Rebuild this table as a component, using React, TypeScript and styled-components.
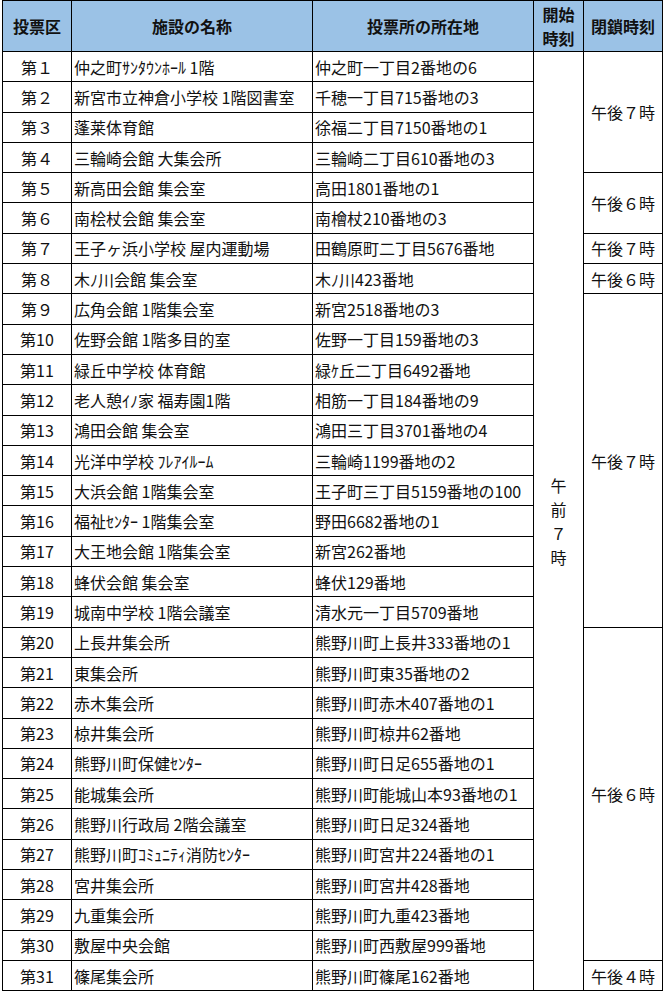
import React from "react";
import styled, { createGlobalStyle } from "styled-components";

const Global = createGlobalStyle`
  html, body { margin: 0; padding: 0; background: #fff; }
  body {
    font-family: "Noto Sans CJK JP", "Noto Sans", sans-serif;
    color: #111;
  }
`;

const Page = styled.div`
  padding: 0 0 0 2px;
`;

const Grid = styled.div`
  display: grid;
  width: max-content;
  grid-template-columns: 68px 240px 220px 49px 78px;
  grid-template-rows: 50px repeat(31, 29.3px);
  gap: 1px;
  padding: 1px;
  background: #000;
`;

const Cell = styled.div<{ $align?: "left" | "center" }>`
  background: #fff;
  display: flex;
  align-items: center;
  justify-content: ${(p) => (p.$align === "left" ? "flex-start" : "center")};
  padding: 0 ${(p) => (p.$align === "left" ? "0 0 2px" : "0")};
  padding-left: ${(p) => (p.$align === "left" ? "2px" : "0")};
  font-size: 16px;
  line-height: 1;
  white-space: nowrap;
  overflow: hidden;
`;

const HeadCell = styled.div`
  background: #9bc2e6;
  display: flex;
  align-items: center;
  justify-content: center;
  text-align: center;
  font-size: 16px;
  font-weight: 700;
  line-height: 24px;
  color: #111;
  white-space: pre-line;
`;

const StartCell = styled.div`
  grid-column: 4;
  grid-row: 2 / span 31;
  background: #fff;
  display: flex;
  align-items: center;
  justify-content: center;
  text-align: center;
  font-size: 16px;
  line-height: 24px;
  white-space: pre-line;
`;

const CloseCell = styled.div<{ $start: number; $span: number }>`
  grid-column: 5;
  grid-row: ${(p) => p.$start} / span ${(p) => p.$span};
  background: #fff;
  display: flex;
  align-items: center;
  justify-content: center;
  font-size: 16px;
  line-height: 1;
`;

const rows: [string, string, string][] = [
  ["第１", "仲之町ｻﾝﾀｳﾝﾎｰﾙ 1階", "仲之町一丁目2番地の6"],
  ["第２", "新宮市立神倉小学校 1階図書室", "千穂一丁目715番地の3"],
  ["第３", "蓬莱体育館", "徐福二丁目7150番地の1"],
  ["第４", "三輪崎会館 大集会所", "三輪崎二丁目610番地の3"],
  ["第５", "新高田会館 集会室", "高田1801番地の1"],
  ["第６", "南桧杖会館 集会室", "南檜杖210番地の3"],
  ["第７", "王子ヶ浜小学校 屋内運動場", "田鶴原町二丁目5676番地"],
  ["第８", "木ﾉ川会館 集会室", "木ﾉ川423番地"],
  ["第９", "広角会館 1階集会室", "新宮2518番地の3"],
  ["第10", "佐野会館 1階多目的室", "佐野一丁目159番地の3"],
  ["第11", "緑丘中学校 体育館", "緑ｹ丘二丁目6492番地"],
  ["第12", "老人憩ｲﾉ家 福寿園1階", "相筋一丁目184番地の9"],
  ["第13", "鴻田会館 集会室", "鴻田三丁目3701番地の4"],
  ["第14", "光洋中学校 ﾌﾚｱｲﾙｰﾑ", "三輪崎1199番地の2"],
  ["第15", "大浜会館 1階集会室", "王子町三丁目5159番地の100"],
  ["第16", "福祉ｾﾝﾀｰ 1階集会室", "野田6682番地の1"],
  ["第17", "大王地会館 1階集会室", "新宮262番地"],
  ["第18", "蜂伏会館 集会室", "蜂伏129番地"],
  ["第19", "城南中学校 1階会議室", "清水元一丁目5709番地"],
  ["第20", "上長井集会所", "熊野川町上長井333番地の1"],
  ["第21", "東集会所", "熊野川町東35番地の2"],
  ["第22", "赤木集会所", "熊野川町赤木407番地の1"],
  ["第23", "椋井集会所", "熊野川町椋井62番地"],
  ["第24", "熊野川町保健ｾﾝﾀｰ", "熊野川町日足655番地の1"],
  ["第25", "能城集会所", "熊野川町能城山本93番地の1"],
  ["第26", "熊野川行政局 2階会議室", "熊野川町日足324番地"],
  ["第27", "熊野川町ｺﾐｭﾆﾃｨ消防ｾﾝﾀｰ", "熊野川町宮井224番地の1"],
  ["第28", "宮井集会所", "熊野川町宮井428番地"],
  ["第29", "九重集会所", "熊野川町九重423番地"],
  ["第30", "敷屋中央会館", "熊野川町西敷屋999番地"],
  ["第31", "篠尾集会所", "熊野川町篠尾162番地"],
];

// [first data row index (0-based), span, label]
const closing: [number, number, string][] = [
  [0, 4, "午後７時"],
  [4, 2, "午後６時"],
  [6, 1, "午後７時"],
  [7, 1, "午後６時"],
  [8, 11, "午後７時"],
  [19, 11, "午後６時"],
  [30, 1, "午後４時"],
];

export default function App() {
  return (
    <>
      <Global />
      <Page>
        <Grid>
          <HeadCell>投票区</HeadCell>
          <HeadCell>施設の名称</HeadCell>
          <HeadCell>投票所の所在地</HeadCell>
          <HeadCell>{"開始\n時刻"}</HeadCell>
          <HeadCell>閉鎖時刻</HeadCell>
          {rows.map(([no, name, addr], i) => {
            const close = closing.find((c) => c[0] === i);
            return (
              <React.Fragment key={no}>
                <Cell>{no}</Cell>
                <Cell $align="left">{name}</Cell>
                <Cell $align="left">{addr}</Cell>
                {i === 0 && <StartCell>{"午\n前\n７\n時"}</StartCell>}
                {close && (
                  <CloseCell $start={i + 2} $span={close[1]}>
                    {close[2]}
                  </CloseCell>
                )}
              </React.Fragment>
            );
          })}
        </Grid>
      </Page>
    </>
  );
}
